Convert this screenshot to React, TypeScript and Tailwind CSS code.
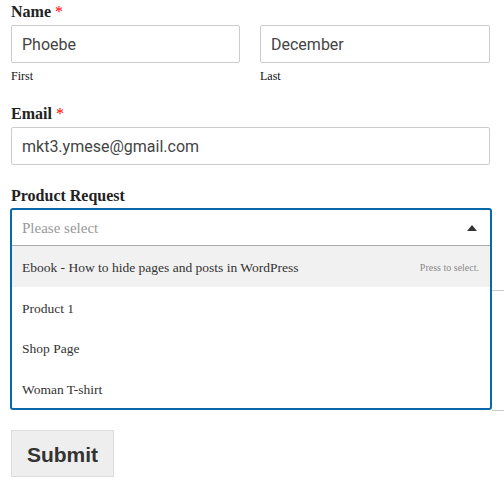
import React from "react";

const serif = { fontFamily: '"Liberation Serif", "Times New Roman", serif' };

function Label({ children }: { children: React.ReactNode }) {
  return (
    <div
      className="pt-[2px] text-[16px] font-bold leading-[20px] text-[#222] mb-[3px]"
      style={serif}
    >
      {children} <span className="text-[#ff0000] font-normal">*</span>
    </div>
  );
}

function Input({ value, className = "" }: { value: string; className?: string }) {
  return (
    <div
      className={`h-[38px] border border-[#ccc] rounded-[2px] bg-white pl-[10px] pt-[2px] flex items-center text-[16px] text-[#444] ${className}`}
      style={{ fontFamily: 'Roboto, "Liberation Sans", sans-serif' }}
    >
      {value}
    </div>
  );
}

export default function App() {
  const options = ["Product 1", "Shop Page", "Woman T-shirt"];
  return (
    <div className="relative w-[504px] h-[481px] bg-white overflow-hidden pl-[11px] pr-[14px]">
      {/* peeking field edges behind the open dropdown */}
      <div className="absolute left-[492px] right-0 top-[290px] h-[1px] bg-[#ccc]" />
      <div className="absolute left-[492px] right-0 top-[410px] h-[1px] bg-[#ccc]" />

      {/* Name */}
      <div>
        <Label>Name</Label>
        <div className="flex gap-[20px]">
          <div className="w-[229px]">
            <Input value="Phoebe" />
            <div className="mt-[6px] text-[12px] leading-[15px] text-[#111]" style={serif}>
              First
            </div>
          </div>
          <div className="w-[230px]">
            <Input value="December" />
            <div className="mt-[6px] text-[12px] leading-[15px] text-[#111]" style={serif}>
              Last
            </div>
          </div>
        </div>
      </div>

      {/* Email */}
      <div className="mt-[18px]">
        <Label>Email</Label>
        <Input value="mkt3.ymese@gmail.com" />
      </div>

      {/* Product Request */}
      <div className="mt-[19px]">
        <div
          className="pt-[2px] text-[16px] font-bold leading-[20px] text-[#222] mb-[2px]"
          style={serif}
        >
          Product Request
        </div>
        <div
          className="relative z-10 -ml-[1px] w-[482px] border-2 border-[#0968aa] rounded-[3px] bg-white"
          style={serif}
        >
          <div className="h-[36px] flex items-center justify-between pl-[10px] pr-[13px] pt-[2px] border-b border-[#aaa]">
            <span className="text-[15px] text-[#999]">Please select</span>
            <svg width="10" height="6" viewBox="0 0 10 6" className="-mt-[1px]">
              <path d="M0 6 L5 0 L10 6 Z" fill="#333" />
            </svg>
          </div>
          <div className="h-[40.5px] bg-[#f1f1f1] flex items-center justify-between pl-[10px] pr-[11px] pt-[3px]">
            <span className="text-[13.5px] text-[#333]">
              Ebook - How to hide pages and posts in WordPress
            </span>
            <span className="text-[10px] text-[#8a8a8a]">Press to select.</span>
          </div>
          {options.map((o) => (
            <div key={o} className="h-[40.5px] flex items-center pl-[10px] pt-[4px]">
              <span className="text-[13.5px] text-[#333]">{o}</span>
            </div>
          ))}
        </div>
      </div>

      {/* Submit */}
      <div className="mt-[20px]">
        <button
          className="h-[47px] w-[103px] border border-[#ddd] bg-[#eee] pt-[2px] text-[21px] font-bold text-[#333] flex items-center justify-center"
          style={{ fontFamily: '"Liberation Sans", Arial, sans-serif' }}
        >
          Submit
        </button>
      </div>
    </div>
  );
}
